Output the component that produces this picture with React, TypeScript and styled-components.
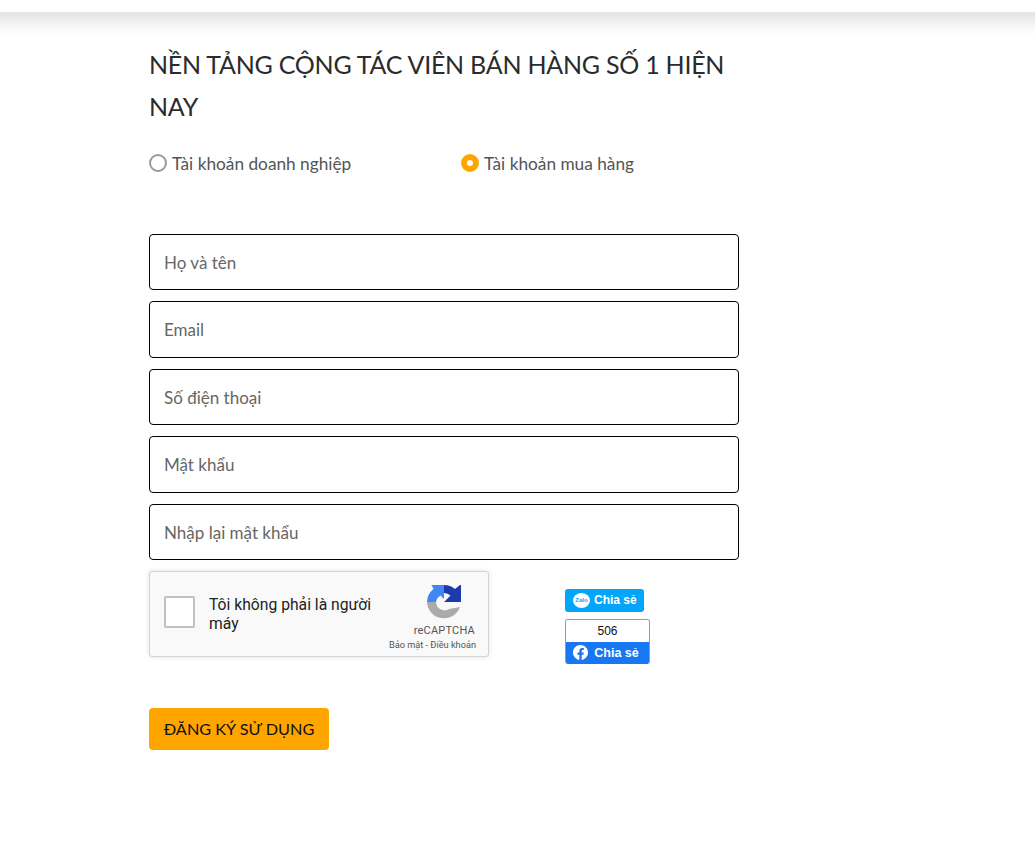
import styled, { createGlobalStyle } from "styled-components";

const GlobalStyle = createGlobalStyle`
    html, body {
        margin: 0;
        padding: 0;
        background: #fff;
    }
    body {
        font-family: "Lato", "Noto Sans", sans-serif;
    }
`;

const FIELDS = ["Họ và tên", "Email", "Số điện thoại", "Mật khẩu", "Nhập lại mật khẩu"];

const App = () => {
    return (
        <Page>
            <GlobalStyle />
            <Header />
            <Content>
                <Title>NỀN TẢNG CỘNG TÁC VIÊN BÁN HÀNG SỐ 1 HIỆN NAY</Title>
                <RadioRow>
                    <RadioLabel>
                        <RadioMark />
                        Tài khoản doanh nghiệp
                    </RadioLabel>
                    <RadioLabel>
                        <RadioMark $checked />
                        Tài khoản mua hàng
                    </RadioLabel>
                </RadioRow>
                <FieldList>
                    {FIELDS.map(field => (
                        <Field key={field} type="text" placeholder={field} />
                    ))}
                </FieldList>
                <VerifyRow>
                    <Captcha>
                        <CaptchaBox />
                        <CaptchaText>Tôi không phải là người máy</CaptchaText>
                        <CaptchaBrand>
                            <BrandLogo width="34" height="34" viewBox="0 0 34 34">
                                <path d="M17 0 A17 17 0 0 1 28 4 L33 0 H34 V17 H17 L23.500 10.500 A9 9 0 0 0 17 8 Z" fill="#1c3aa9" />
                                <path d="M4.500 0 H17 V14 L13.500 10.500 A9 9 0 0 0 9 17 H0 A17 17 0 0 1 6.500 4 Z" fill="#4285f4" />
                                <path d="M0 17 H9 A8.500 8.500 0 0 0 22 24 L33 22 A17 17 0 0 1 0 17 Z" fill="#ababab" />
                            </BrandLogo>
                            <BrandName>reCAPTCHA</BrandName>
                            <BrandLinks>Bảo mật - Điều khoản</BrandLinks>
                        </CaptchaBrand>
                    </Captcha>
                    <ShareColumn>
                        <ZaloShare>
                            <ZaloIcon>Zalo</ZaloIcon>
                            Chia sẻ
                        </ZaloShare>
                        <FacebookShare>
                            <ShareCount>506</ShareCount>
                            <FacebookButton>
                                <svg width="15" height="15" viewBox="0 0 16 16" fill="#fff">
                                    <path d="M16 8.050C16 3.600 12.420 0 8 0S0 3.600 0 8.050c0 4.020 2.930 7.350 6.750 7.950v-5.620H4.720V8.050h2.030V6.280c0-2.020 1.190-3.130 3.020-3.130.88 0 1.790.16 1.790.16v1.980h-1.010c-.99 0-1.300.62-1.300 1.260v1.500h2.220l-.35 2.330H9.250V16C13.070 15.400 16 12.070 16 8.050z" />
                                </svg>
                                Chia sẻ
                            </FacebookButton>
                        </FacebookShare>
                    </ShareColumn>
                </VerifyRow>
                <SubmitButton>ĐĂNG KÝ SỬ DỤNG</SubmitButton>
            </Content>
        </Page>
    );
};

export default App;

const Page = styled.div`
    width: 1035px;
    height: 852px;
    overflow: hidden;
    background: #fff;
`;

const Header = styled.header`
    height: 12px;
    margin: 0 -40px;
    background: #fff;
    box-shadow: 0 4px 20px rgba(0, 0, 0, 0.24);
`;

const Content = styled.main`
    width: 590px;
    margin-left: 149px;
    padding-top: 31px;
`;

const Title = styled.h1`
    margin: 0;
    font-size: 25px;
    line-height: 42px;
    letter-spacing: -0.25px;
    font-weight: 400;
    color: #2b2b2b;
`;

const RadioRow = styled.div`
    display: grid;
    grid-template-columns: 312px 1fr;
    margin-top: 23px;
`;

const RadioLabel = styled.label`
    display: flex;
    align-items: center;
    gap: 5px;
    height: 26px;
    font-size: 17.250px;
    color: #555;
`;

const RadioMark = styled.span<{ $checked?: boolean }>`
    box-sizing: border-box;
    width: 18px;
    height: 18px;
    border-radius: 50%;
    border: ${props => (props.$checked ? "6px solid #ffa500" : "2px solid #999")};
    background: #fff;
`;

const FieldList = styled.div`
    display: grid;
    grid-template-rows: repeat(5, 56.500px);
    row-gap: 11px;
    margin-top: 57.900px;
`;

const Field = styled.input`
    box-sizing: border-box;
    width: 100%;
    height: 100%;
    padding: 0 14px;
    border: 1px solid #000;
    border-radius: 4px;
    font-family: inherit;
    font-size: 17px;
    outline: none;

    &::placeholder {
        color: #666;
        opacity: 1;
    }
`;

const VerifyRow = styled.div`
    display: flex;
    align-items: flex-start;
    margin-top: 10.600px;
`;

const Captcha = styled.div`
    box-sizing: border-box;
    display: flex;
    align-items: center;
    width: 340px;
    height: 86px;
    padding: 0 12px 0 14px;
    background: #f9f9f9;
    border: 1px solid #d3d3d3;
    border-radius: 3px;
    box-shadow: 0 0 4px 1px rgba(0, 0, 0, 0.08);
    font-family: "Roboto", sans-serif;
`;

const CaptchaBox = styled.div`
    box-sizing: border-box;
    flex: none;
    width: 31px;
    height: 32px;
    margin-bottom: 4px;
    background: #fff;
    border: 2px solid #c1c1c1;
    border-radius: 2px;
`;

const CaptchaText = styled.div`
    width: 175px;
    margin-left: 14px;
    font-size: 15.700px;
    line-height: 19px;
    color: #222;
`;

const CaptchaBrand = styled.div`
    display: flex;
    flex: 1;
    flex-direction: column;
    align-items: flex-end;
    padding-top: 8px;
`;

const BrandLogo = styled.svg`
    margin-right: 15px;
`;

const BrandName = styled.div`
    margin-top: 5px;
    margin-right: 1px;
    font-size: 11px;
    line-height: 14px;
    letter-spacing: 0.2px;
    color: #555;
`;

const BrandLinks = styled.div`
    font-size: 9.200px;
    line-height: 13px;
    white-space: nowrap;
    color: #555;
`;

const ShareColumn = styled.div`
    display: flex;
    flex-direction: column;
    align-items: flex-start;
    gap: 7px;
    margin: 18px 0 0 76px;
    font-family: "Liberation Sans", sans-serif;
`;

const ZaloShare = styled.div`
    display: flex;
    align-items: center;
    gap: 4px;
    width: 79px;
    height: 23px;
    box-sizing: border-box;
    padding-left: 8px;
    background: #03a5fa;
    border-radius: 3px;
    font-size: 12px;
    font-weight: 700;
    color: #fff;
`;

const ZaloIcon = styled.span`
    display: flex;
    align-items: center;
    justify-content: center;
    width: 17px;
    height: 15px;
    border-radius: 50%;
    background: #fff;
    color: #03a5fa;
    font-size: 6px;
    font-weight: 700;
`;

const FacebookShare = styled.div`
    width: 85px;
    height: 45px;
    box-sizing: border-box;
    border: 1px solid #9a9a9a;
    border-bottom: none;
    border-radius: 3px;
    overflow: hidden;
`;

const ShareCount = styled.div`
    height: 22px;
    line-height: 22px;
    text-align: center;
    font-size: 12px;
    color: #111;
    background: #fff;
`;

const FacebookButton = styled.div`
    display: flex;
    align-items: center;
    justify-content: center;
    gap: 6px;
    height: 22px;
    margin: 0 -1px;
    padding-right: 3px;
    background: #1877f2;
    font-size: 12.500px;
    font-weight: 700;
    color: #fff;
`;

const SubmitButton = styled.button`
    display: block;
    width: 180px;
    height: 42px;
    margin-top: 44px;
    padding: 0;
    background: #ffa500;
    border: none;
    border-radius: 4px;
    font-family: inherit;
    font-size: 16.250px;
    color: #111;
`;
